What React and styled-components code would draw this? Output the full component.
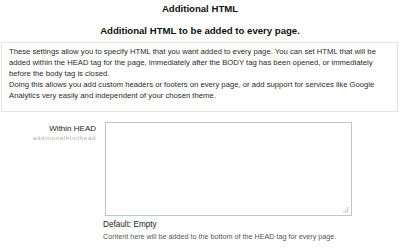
import React from "react";
import styled, { createGlobalStyle } from "styled-components";

const Global = createGlobalStyle`
  html, body { margin: 0; padding: 0; background: #fff; }
  body { font-family: "Liberation Sans", Arial, sans-serif; color: #222; }
`;

const Page = styled.div`
  width: 400px;
  height: 248px;
  overflow: hidden;
  display: flex;
  flex-direction: column;
`;

const Title = styled.h1`
  margin: 3px 0 0;
  font-size: 9.6px;
  font-weight: bold;
  text-align: center;
  line-height: 12px;
  color: #111;
`;

const Subtitle = styled.h2`
  margin: 10px 0 0;
  font-size: 9.6px;
  font-weight: bold;
  text-align: center;
  line-height: 12px;
  color: #111;
`;

const InfoBox = styled.div`
  margin: 5px 2px 0 1px;
  border: 1px solid #e4e4dc;
  padding: 3px 7px 10px;
  font-size: 7.7px;
  line-height: 11px;
  color: #2a2a2a;
`;

const Row = styled.div`
  display: grid;
  grid-template-columns: 96px 1fr;
  column-gap: 9px;
  margin-top: 10px;
`;

const LabelCol = styled.div`
  text-align: right;
  padding-top: 2px;
`;

const Label = styled.div`
  font-size: 8px;
  line-height: 10px;
  color: #222;
`;

const Key = styled.div`
  font-size: 6px;
  letter-spacing: 0.7px;
  line-height: 8px;
  color: #aaa;
`;

const Field = styled.div`
  display: flex;
  flex-direction: column;
`;

const AreaWrap = styled.div`
  position: relative;
  width: 247px;
  height: 94px;
`;

const TextArea = styled.textarea`
  box-sizing: border-box;
  display: block;
  width: 100%;
  height: 100%;
  border: 1px solid #b4c6d8;
  margin: 0;
  padding: 2px;
  resize: none;
  font-family: inherit;
  outline: none;
`;

const Grip = styled.svg`
  position: absolute;
  right: 3px;
  bottom: 3px;
  width: 7px;
  height: 7px;
  pointer-events: none;
`;

const Default = styled.div`
  margin: 3px 0 0 -2px;
  font-size: 8.2px;
  line-height: 11px;
  color: #222;
`;

const Help = styled.div`
  margin: 2px 0 0 -2px;
  font-size: 7.2px;
  line-height: 10px;
  color: #555;
`;

export default function App() {
  return (
    <Page>
      <Global />
      <Title>Additional HTML</Title>
      <Subtitle>Additional HTML to be added to every page.</Subtitle>
      <InfoBox>
        These settings allow you to specify HTML that you want added to every page. You can set HTML that will be
        added within the HEAD tag for the page, immediately after the BODY tag has been opened, or immediately
        before the body tag is closed.
        <br />
        Doing this allows you add custom headers or footers on every page, or add support for services like Google
        Analytics very easily and independent of your chosen theme.
      </InfoBox>
      <Row>
        <LabelCol>
          <Label>Within HEAD</Label>
          <Key>additionalhtmlhead</Key>
        </LabelCol>
        <Field>
          <AreaWrap>
            <TextArea />
            <Grip viewBox="0 0 7 7">
              <rect x="5" y="1" width="1.5" height="1.5" fill="#c8c8c8" />
              <rect x="3" y="3" width="1.5" height="1.5" fill="#c8c8c8" />
              <rect x="5" y="3" width="1.5" height="1.5" fill="#c8c8c8" />
              <rect x="1" y="5" width="1.5" height="1.5" fill="#c8c8c8" />
              <rect x="3" y="5" width="1.5" height="1.5" fill="#c8c8c8" />
              <rect x="5" y="5" width="1.5" height="1.5" fill="#c8c8c8" />
            </Grip>
          </AreaWrap>
          <Default>Default: Empty</Default>
          <Help>Content here will be added to the bottom of the HEAD tag for every page.</Help>
        </Field>
      </Row>
    </Page>
  );
}
